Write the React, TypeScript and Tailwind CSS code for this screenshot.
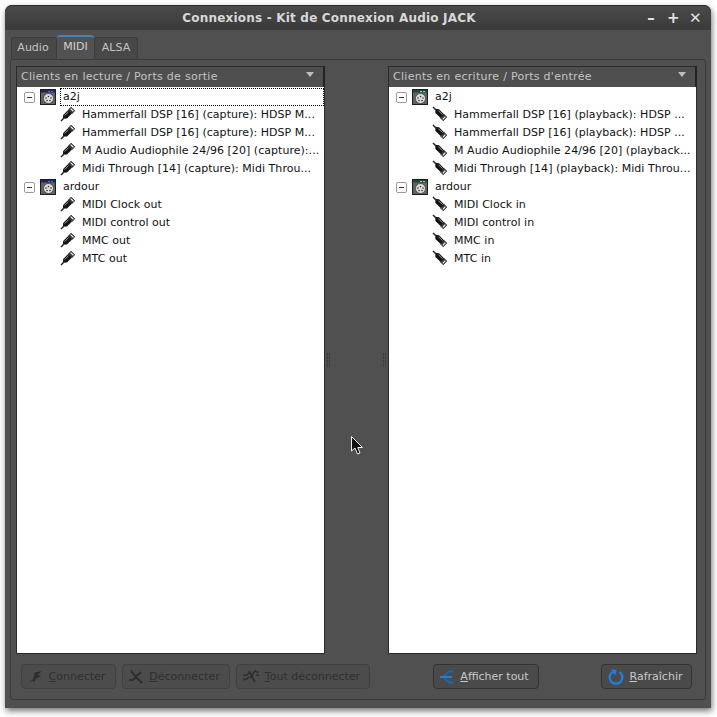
import React from "react";

const font = "font-['DejaVu_Sans',sans-serif]";

function Plug({ flip }: { flip?: boolean }) {
  return (
    <svg width="16" height="16" viewBox="0 0 16 16" className="mt-[-2px] shrink-0">
      <g transform={flip ? "rotate(90 8 8)" : undefined}>
        <path d="M1 15 L3.5 12.5" stroke="#222" strokeWidth="1.4" fill="none" />
        <path d="M2.8 12.8 L3.2 9 L8.4 3.8 L12 7.4 L7 12.6 Z" fill="#141414" />
        <path d="M4.6 9.6 L8.6 5.6" stroke="#9a9a9a" strokeWidth="1" fill="none" />
        <path d="M8.6 3.8 L11 1.2 L14.8 4.8 L12 7.4 Z" fill="#3a3a3a" stroke="#111" strokeWidth="0.7" />
        <path d="M10.6 2.6 L13.4 5.2" stroke="#f4f4f4" strokeWidth="1.2" />
      </g>
    </svg>
  );
}

function ClientIcon({ playback }: { playback?: boolean }) {
  return (
    <svg width="16" height="16" viewBox="0 0 16 16" className="shrink-0">
      <rect x="0.5" y="0.5" width="15" height="15" fill="#626262" stroke="#1c1c1c" />
      <rect x="1" y="1" width="14" height="2.5" fill={playback ? "#1d4a3a" : "#1b2560"} />
      <rect x="8" y="2" width="2" height="1" fill={playback ? "#7fe07f" : "#e04040"} />
      <rect x="11" y="2" width="2" height="1" fill={playback ? "#7fe07f" : "#e04040"} />
      <circle cx="8.5" cy="9.5" r="5" fill="#dcdcdc" stroke="#3a3a3a" strokeWidth="0.7" />
      <circle cx="6" cy="9" r="0.8" fill="#333" />
      <circle cx="8.5" cy="7.5" r="0.8" fill="#333" />
      <circle cx="11" cy="9" r="0.8" fill="#333" />
      <circle cx="7" cy="11.5" r="0.8" fill="#333" />
      <circle cx="10" cy="11.5" r="0.8" fill="#333" />
    </svg>
  );
}

function Expander() {
  return (
    <span className="flex h-[11px] w-[11px] items-center justify-center rounded-[2px] border border-[#9a9a9a] bg-white shrink-0">
      <span className="h-px w-[5px] bg-[#333]" />
    </span>
  );
}

function Port({ name, flip }: { name: string; flip?: boolean }) {
  return (
    <div className="flex h-[18px] items-center pl-[43px]">
      <Plug flip={flip} />
      <span className="ml-[6px] whitespace-nowrap tracking-[0.04px]">{name}</span>
    </div>
  );
}

function Client({ name, ports, playback, focused }: { name: string; ports: string[]; playback?: boolean; focused?: boolean }) {
  return (
    <div>
      <div className="flex h-[18px] items-center pl-[7px]">
        <Expander />
        <span className="ml-[5px]"><ClientIcon playback={playback} /></span>
        <span className={`ml-[4px] flex-1 pl-[2px] leading-[16px] ${focused ? "border border-dotted border-black" : "border border-transparent"}`}>{name}</span>
      </div>
      {ports.map((p) => (
        <Port key={p} name={p} flip={playback} />
      ))}
    </div>
  );
}

function Panel({ title, clients, playback }: { title: string; clients: { name: string; ports: string[] }[]; playback?: boolean }) {
  return (
    <div className="flex h-[588px] w-[309px] flex-col">
      <div className="flex h-[21px] items-center justify-between border-t border-r-2 border-l border-[#2b2b2b] border-r-[#222] bg-[#4f4f4f] pl-[4px] pr-[9px] text-[#c4c4c4]">
        <span className="tracking-[0.28px]">{title}</span>
        <span className="mb-[5px] h-0 w-0 border-x-[4px] border-t-[5px] border-x-transparent border-t-[#bdbdbd]" />
      </div>
      <div className="flex-1 overflow-hidden border border-t-0 border-[#2b2b2b] bg-white pt-[1px] text-[#111]">
        {clients.map((c, i) => (
          <Client key={c.name} name={c.name} ports={c.ports} playback={playback} focused={!playback && i === 0} />
        ))}
      </div>
    </div>
  );
}

function BtnIcon({ kind }: { kind: string }) {
  if (kind === "connect")
    return (
      <svg width="16" height="16" viewBox="0 0 16 16"><path d="M1 13 L5 10.5 L7 3.5 L14 2 L9.5 6 L13 7 L8 9.5 L5.5 14.5 L5.5 12 Z" fill="#2e2e2e" /></svg>
    );
  if (kind === "disconnect")
    return (
      <svg width="16" height="16" viewBox="0 0 16 16"><path d="M3 2 L8 8 L14 14 M8 7.5 L13 3 M7.5 8.5 L5 11 H1" stroke="#2e2e2e" strokeWidth="2" fill="none" /></svg>
    );
  if (kind === "all")
    return (
      <svg width="18" height="16" viewBox="0 0 18 16"><path d="M1 6 H5 L8 3 M1 10.5 H4 L7 8 M7 2 L13 13 M8 9 L12 3 L14 1.5 M14 3 H17 M14 6 H17" stroke="#2e2e2e" strokeWidth="1.7" fill="none" /></svg>
    );
  if (kind === "show")
    return (
      <svg width="16" height="16" viewBox="0 0 16 16"><path d="M14 2.5 H10 L4 8 L10 13.5 H14" stroke="#1668b8" strokeWidth="1.8" fill="none" /><path d="M1 8 H13" stroke="#2a86dc" strokeWidth="1.6" /></svg>
    );
  return (
    <svg width="18" height="18" viewBox="0 0 18 18"><path d="M5.5 4 A6.4 6.4 0 1 0 12.5 4" stroke="#1f7fe0" strokeWidth="2.4" fill="none" /><path d="M4.5 1 L9.5 2 L8.5 7.5 L6 5 Z" fill="#1f7fe0" /></svg>
  );
}

function Btn({ kind, u, rest, w, disabled }: { kind: string; u: string; rest: string; w: string; disabled?: boolean }) {
  return (
    <button className={`flex h-[25px] items-center justify-center gap-[5px] rounded-[4px] border pr-[4px] pt-[1px] ${w} ${disabled ? "border-[#404040] bg-[#4c4c4c] text-[#2f2f2f]" : "border-[#333] bg-[#4a4a4a] text-[#c8c8c8]"}`}>
      <BtnIcon kind={kind} />
      <span><span className="underline">{u}</span>{rest}</span>
    </button>
  );
}

const left = [
  { name: "a2j", ports: ["Hammerfall DSP [16] (capture): HDSP M...", "Hammerfall DSP [16] (capture): HDSP M...", "M Audio Audiophile 24/96 [20] (capture):...", "Midi Through [14] (capture): Midi Throu..."] },
  { name: "ardour", ports: ["MIDI Clock out", "MIDI control out", "MMC out", "MTC out"] },
];
const right = [
  { name: "a2j", ports: ["Hammerfall DSP [16] (playback): HDSP ...", "Hammerfall DSP [16] (playback): HDSP ...", "M Audio Audiophile 24/96 [20] (playback...", "Midi Through [14] (playback): Midi Throu..."] },
  { name: "ardour", ports: ["MIDI Clock in", "MIDI control in", "MMC in", "MTC in"] },
];

export default function App() {
  return (
    <div className={`relative h-[717px] w-[717px] overflow-hidden bg-white pl-[5px] pt-[5px] text-[11px] ${font}`}>
      <div className="flex h-[703px] w-[706px] flex-col rounded-t-[7px] bg-[#505050] shadow-[1px_3px_6px_rgba(0,0,0,0.55)]">
        {/* Title bar */}
        <div className="relative flex h-[25px] items-center justify-center rounded-t-[7px] border-t border-[#2c2c2c] bg-gradient-to-b from-[#4a4a4a] to-[#3a3a3a] pr-[58px] text-[12px] font-bold tracking-[0.2px] text-[#d8d8d8]">
          <span>Connexions - Kit de Connexion Audio JACK</span>
          <div className="absolute right-[10px] top-[4px] flex items-center gap-[10px] text-[15px] font-bold leading-[16px] text-[#e0e0e0]">
            <span className="w-[12px] text-center">–</span>
            <span className="w-[12px] text-center">+</span>
            <span className="w-[12px] text-center">✕</span>
          </div>
        </div>

        {/* Tabs */}
        <div className="flex h-[29px] items-end pl-[6px] pt-[5px]">
          <div className="flex h-[22px] w-[46px] items-center justify-center rounded-t-[3px] border border-b-0 border-[#3c3c3c] bg-[#484848] pr-[2px] text-[#c4c4c4]">Audio</div>
          <div className="flex h-[24px] w-[37px] items-center justify-center rounded-t-[3px] border-t-2 border-t-[#4a80b8] bg-[#525252] pb-[1px] text-[#d0d0d0]">MIDI</div>
          <div className="flex h-[22px] w-[44px] items-center justify-center rounded-t-[3px] border border-b-0 border-[#3c3c3c] bg-[#484848] text-[#c4c4c4]">ALSA</div>
        </div>

        {/* Page */}
        <div className="mx-[5px] flex h-[641px] flex-col rounded-[3px] border border-[#3a3a3a] pl-[5px] pr-[8px] pt-[6px]">
          <div className="flex items-start justify-between">
            <Panel title="Clients en lecture / Ports de sortie" clients={left} />
            <div className="flex h-[588px] flex-1 items-center justify-between px-[2px]">
              <span className="h-[14px] w-[3px] border-x border-dotted border-[#333]" />
              <span className="h-[14px] w-[3px] border-x border-dotted border-[#333]" />
            </div>
            <Panel title="Clients en ecriture / Ports d'entrée" clients={right} playback />
          </div>
          <div className="mt-[10px] flex items-center">
            <div className="flex gap-[6px] pl-[5px]">
              <Btn kind="connect" u="C" rest="onnecter" w="w-[95px]" disabled />
              <Btn kind="disconnect" u="D" rest="éconnecter" w="w-[108px]" disabled />
              <Btn kind="all" u="T" rest="out déconnecter" w="w-[134px]" disabled />
            </div>
            <div className="ml-[63px]">
              <Btn kind="show" u="A" rest="fficher tout" w="w-[106px]" />
            </div>
            <div className="ml-[62px]">
              <Btn kind="refresh" u="R" rest="afraîchir" w="w-[91px]" />
            </div>
          </div>
        </div>
      </div>

      {/* Mouse cursor */}
      <svg width="14" height="20" viewBox="0 0 14 20" className="absolute left-[351px] top-[436px]">
        <path d="M0.5 0.5 V15 L4 12 L6.5 18 L9 17 L6.8 11.5 H11.5 Z" fill="#111" stroke="#eee" strokeWidth="1" />
      </svg>
    </div>
  );
}
